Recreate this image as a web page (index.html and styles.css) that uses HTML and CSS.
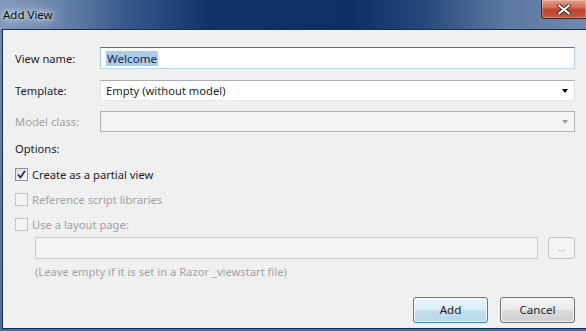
FILE: index.html
```html
<!DOCTYPE html>
<html lang="en">
<head>
    <meta charset="UTF-8">
    <title>Add View</title>
    <link rel="stylesheet" href="styles.css">
</head>
<body>
    <div class="window">
        <!-- Title bar -->
        <div class="titlebar">
            <span class="title">Add View</span>
            <div class="close">
                <svg width="16" height="11" viewBox="0 0 16 11">
                    <path d="M3 1.5 L13 9.5 M13 1.5 L3 9.5" stroke="#3a2a2a" stroke-width="4" stroke-linecap="round"/>
                    <path d="M3 1.5 L13 9.5 M13 1.5 L3 9.5" stroke="#ffffff" stroke-width="2.2" stroke-linecap="round"/>
                </svg>
            </div>
        </div>

        <!-- Client area -->
        <div class="client">
            <div class="field">
                <label class="label">View name:</label>
                <div class="textbox focused"><span class="selection">Welcome</span></div>
            </div>
            <div class="field row-gap">
                <label class="label">Template:</label>
                <div class="combo">Empty (without model)<span class="arrow"></span></div>
            </div>
            <div class="field row-gap disabled">
                <label class="label">Model class:</label>
                <div class="combo inactive"><span class="arrow"></span></div>
            </div>

            <div class="options">Options:</div>

            <div class="checks">
                <div class="check">
                    <span class="box checked">
                        <svg width="9" height="9" viewBox="0 0 9 9">
                            <path d="M1 4.5 L3.5 7.5 L8 0.8" fill="none" stroke="#1d2f86" stroke-width="1.8"/>
                        </svg>
                    </span>
                    Create as a partial view
                </div>
                <div class="check disabled"><span class="box"></span>Reference script libraries</div>
                <div class="check disabled"><span class="box"></span>Use a layout page:</div>
            </div>

            <div class="layout-row">
                <div class="textbox inactive"></div>
                <div class="browse">...</div>
            </div>
            <div class="hint">(Leave empty if it is set in a Razor _viewstart file)</div>

            <div class="buttons">
                <button class="btn default">Add</button>
                <button class="btn">Cancel</button>
            </div>
        </div>
    </div>
</body>
</html>
```

FILE: styles.css
```css
/* General */
body {
    margin: 0;
    padding: 0;
    font-family: 'Noto Sans', 'Open Sans', sans-serif;
    font-size: 11.2px;
    color: #1e1e1e;
    background: #f0f0f0;
}

.window {
    width: 586px;
    height: 331px;
    box-sizing: border-box;
    padding-left: 2px;
    padding-bottom: 1px;
    background: linear-gradient(180deg, #6f8cb5, #4d6e9c);
    overflow: hidden;
}

/* Title bar */
.titlebar {
    height: 29px;
    margin-left: -2px;
    display: flex;
    align-items: flex-start;
    justify-content: space-between;
    background: linear-gradient(90deg, #8299bb 0%, #6a84aa 10%, #34588a 22%, #0f3369 36%, #0c2f66 60%, #24487a 72%, #5b78a2 86%, #6f8ab0 100%);
}

.title {
    margin: 7px 0 0 3px;
    padding: 0 4px 0 0;
    color: #0d0d0d;
    font-size: 11.5px;
    line-height: 16px;
    text-shadow: 0 0 4px #e6edf6, 0 0 8px #d3dfee, 0 0 12px #c0d0e6, 0 0 16px #b0c3dd;
}

.close {
    width: 45px;
    height: 19px;
    box-sizing: border-box;
    border: 1px solid #3c2620;
    border-top: none;
    border-right: none;
    border-radius: 0 0 0 4px;
    background: linear-gradient(180deg, #e4a08e 0%, #d2705a 40%, #c0402a 55%, #c75a40 100%);
    box-shadow: inset 0 0 0 1px rgba(255, 220, 210, 0.35);
    display: flex;
    align-items: center;
    justify-content: center;
}

/* Client area */
.client {
    height: 300px;
    box-sizing: border-box;
    background: #f0f0f0;
    border-top: 1px solid #1b2c47;
    border-left: 1px solid #1b2c47;
    border-bottom: 1px solid #1b2c47;
    padding: 17px 11px 0 12px;
}

.field {
    display: flex;
    align-items: center;
}

.row-gap {
    margin-top: 10px;
}

.field:first-child + .row-gap {
    margin-top: 11px;
}

.label {
    width: 85px;
    flex: none;
}

.disabled {
    color: #a3a3a3;
}

/* Inputs */
.textbox, .combo {
    flex: 1;
    height: 21px;
    box-sizing: border-box;
    background: #ffffff;
    border: 1px solid #abadb3;
    border-color: #abadb3 #dbdfe6 #e3e9ef #e2e3ea;
    display: flex;
    align-items: center;
    padding-left: 5px;
}

.textbox.focused {
    height: 22px;
    border-color: #3d7bad #b5cfe7 #b7d9ed #a4c9e3;
}

.selection {
    background: #a8cdf0;
    color: #1b2a3a;
    padding: 0 1px;
    line-height: 15px;
    font-size: 11.6px;
}

.combo {
    padding-right: 6px;
}

.arrow {
    margin-left: auto;
    width: 0;
    height: 0;
    border-left: 3.5px solid transparent;
    border-right: 3.5px solid transparent;
    border-top: 4px solid #000000;
}

.inactive {
    background: #f4f4f4;
    border: 1px solid #adb2b5;
}

.inactive .arrow {
    border-top-color: #a0a0a0;
}

/* Options */
.options {
    margin-top: 9px;
    line-height: 16px;
}

.checks {
    margin-top: 5px;
}

.check {
    height: 25px;
    display: flex;
    align-items: center;
}

.box {
    width: 13px;
    height: 13px;
    box-sizing: border-box;
    margin-right: 4px;
    border: 1px solid #c5c5c5;
    background: #f4f4f4;
    display: flex;
    align-items: center;
    justify-content: center;
}

.box.checked {
    border-color: #8e8f8f;
    background: linear-gradient(135deg, #dcdcdc, #ffffff);
}

.layout-row {
    display: flex;
    gap: 10px;
    margin-left: 20px;
    height: 22px;
}

.layout-row .textbox {
    height: 22px;
    border-color: #c9c9c9;
}

.browse {
    width: 27px;
    box-sizing: border-box;
    border: 1px solid #c4c4c4;
    border-radius: 3px;
    background: #f4f4f4;
    color: #a0a0a0;
    font-size: 9px;
    display: flex;
    align-items: center;
    justify-content: center;
    padding-bottom: 2px;
}

.hint {
    margin: 5px 0 0 20px;
    line-height: 16px;
    color: #a3a3a3;
}

/* Buttons */
.buttons {
    margin-top: 17px;
    display: flex;
    justify-content: flex-end;
    gap: 12px;
}

.btn {
    width: 75px;
    height: 26px;
    font-family: inherit;
    font-size: 11.6px;
    color: #1e1e1e;
    border: 1px solid #707070;
    border-radius: 3px;
    background: linear-gradient(180deg, #f2f2f2 0%, #ebebeb 50%, #dddddd 51%, #cfcfcf 100%);
    box-shadow: inset 0 0 0 1px rgba(255, 255, 255, 0.7);
    padding: 0 0 1px 0;
}

.btn.default {
    border-color: #3c7fb1;
    background: linear-gradient(180deg, #eaf5fc 0%, #d9edf8 50%, #c4e0f1 51%, #b7d7ea 100%);
    box-shadow: inset 0 0 0 1px rgba(255, 255, 255, 0.8);
}
```
